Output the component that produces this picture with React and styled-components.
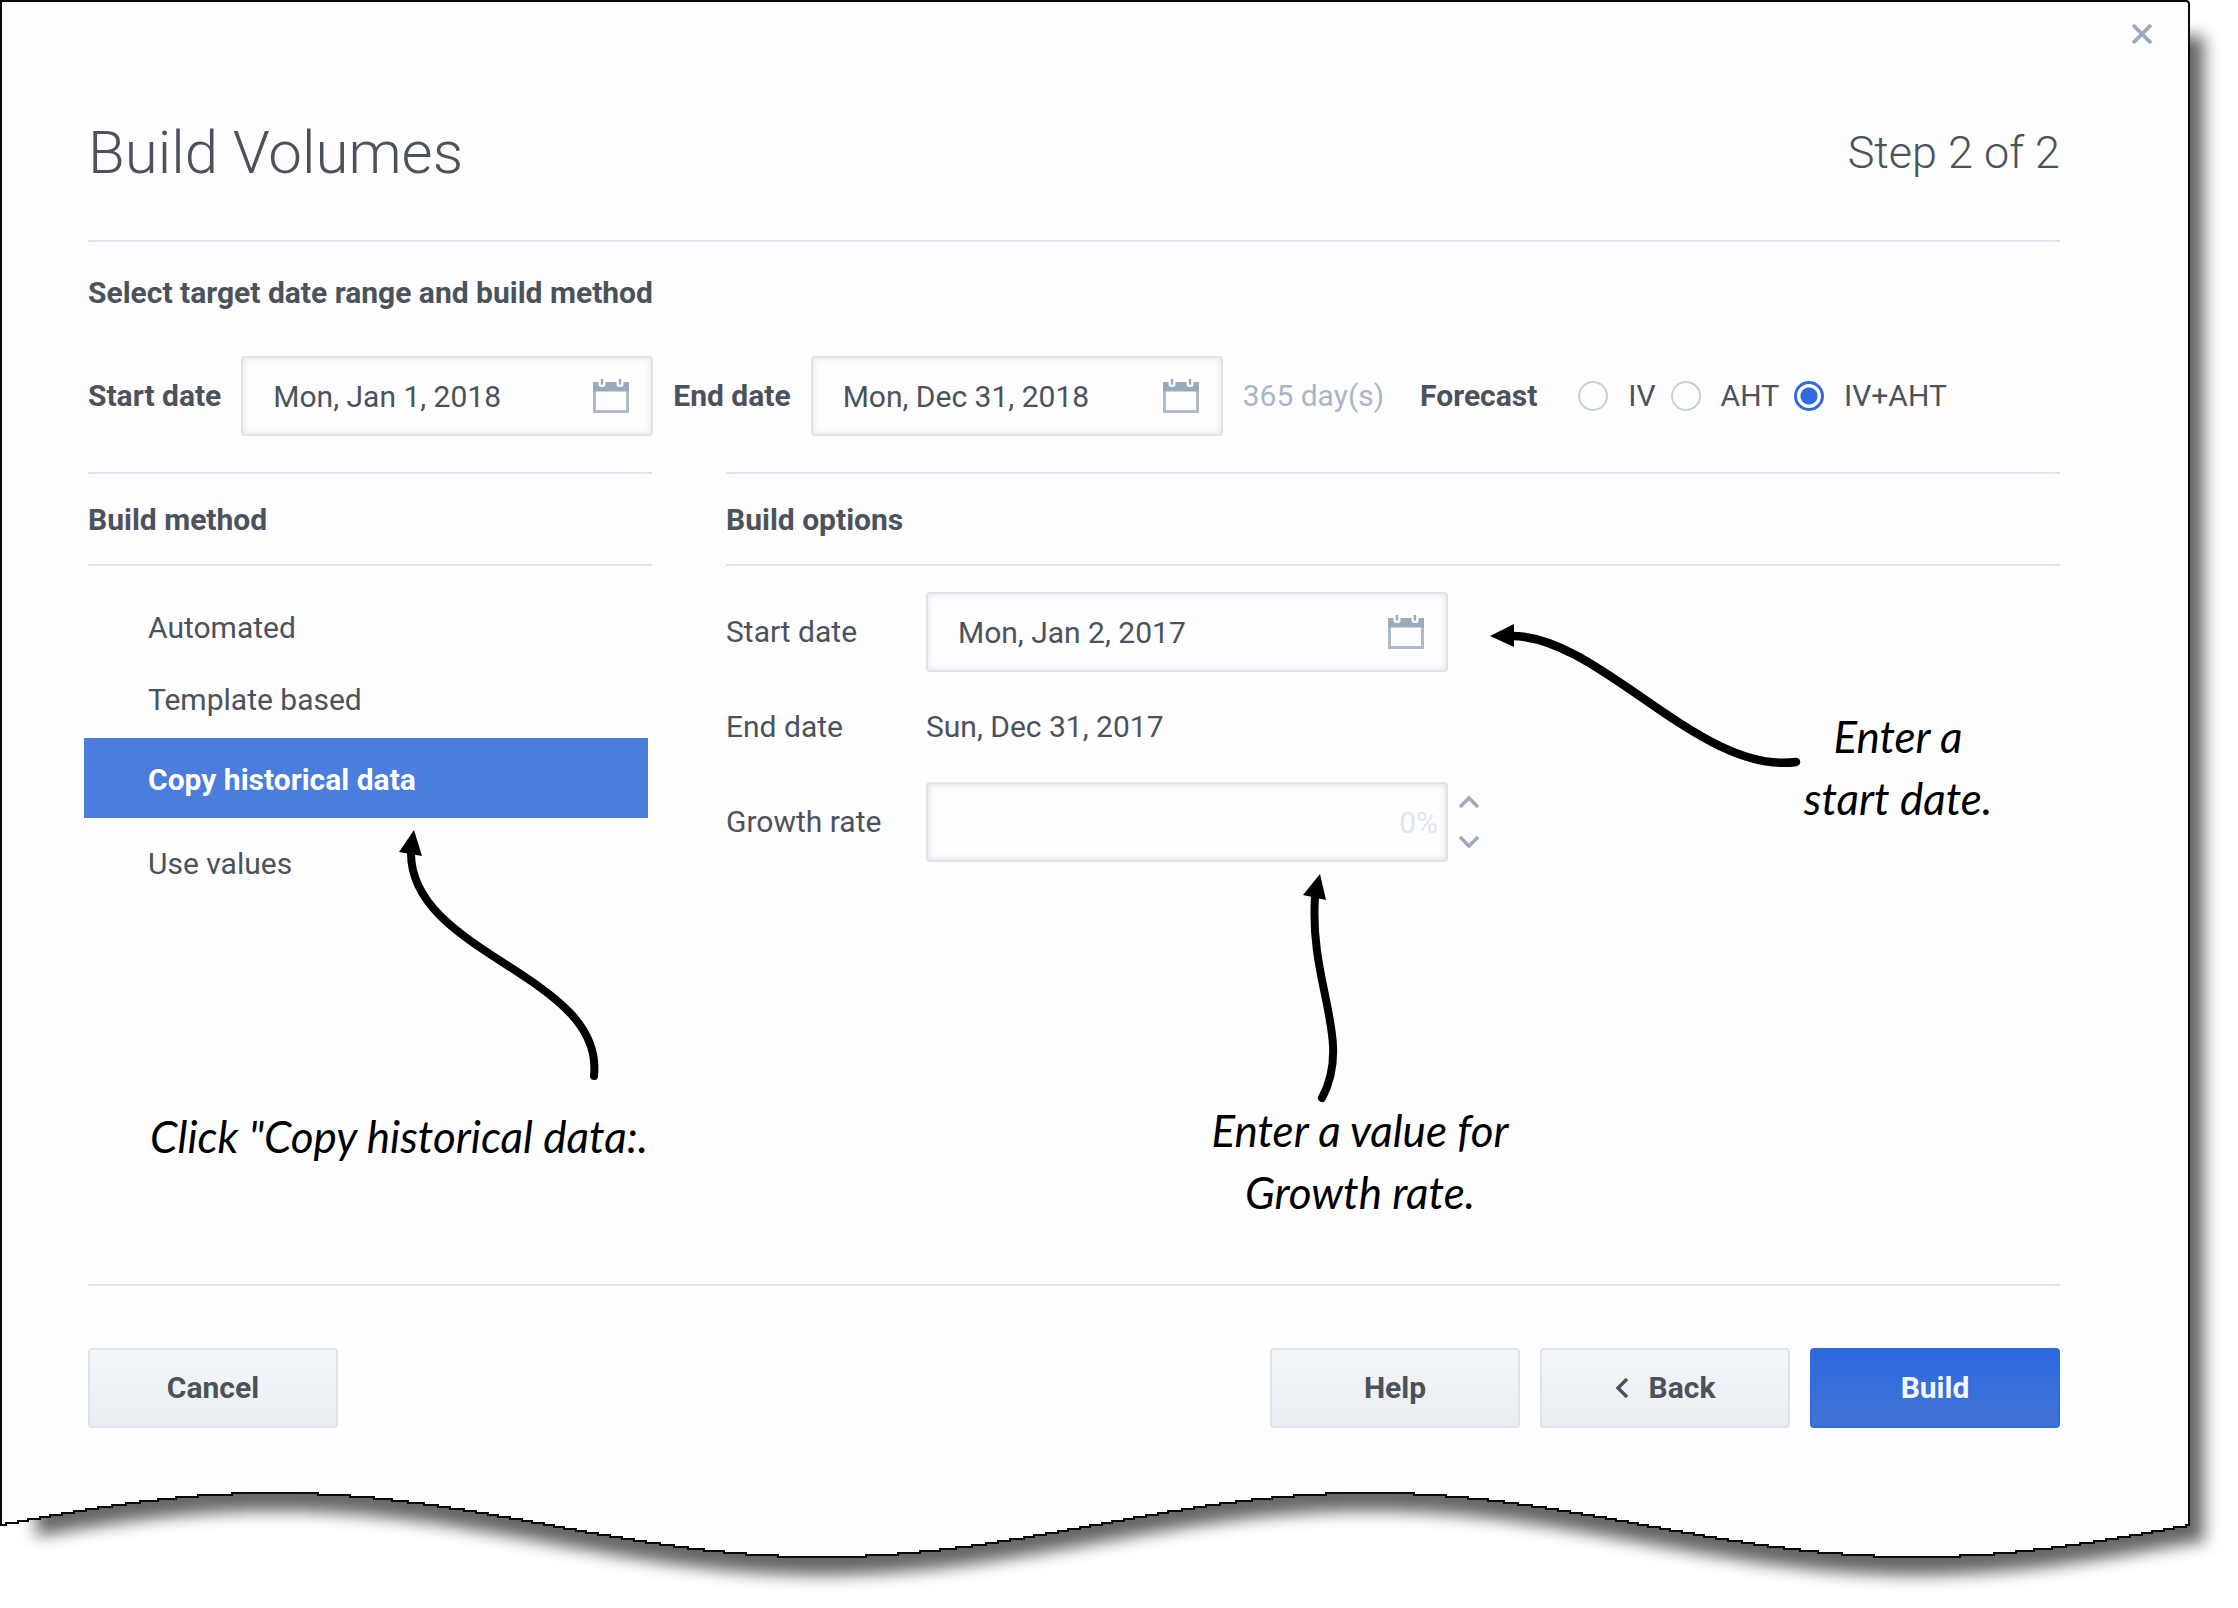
import React from "react";
import styled, { createGlobalStyle } from "styled-components";

const INK = "#4b525b";
const RULE = "#dde3ea";
const STEEL = "#9aaabd";
const BLUE = "#2f6bdc";
const PAPER = "#fdfdfd";

const GlobalStyle = createGlobalStyle`
  *, *::before, *::after { box-sizing: border-box; }
  body {
    margin: 0;
    background: #ffffff;
    color: ${INK};
    font-family: Roboto, "Liberation Sans", sans-serif;
    font-size: 30px;
    line-height: 32px;
  }
  button, input { font: inherit; color: inherit; }
  h1, h2, ul, p { margin: 0; padding: 0; }
`;

const Page = styled.main`
  padding-right: 48px;
  overflow: hidden;
`;

const SheetWrap = styled.div`
  position: relative;
  z-index: 0;
  clip-path: inset(0 -48px 0 0);

  &::before {
    content: "";
    position: absolute;
    z-index: -1;
    inset: 36px -14px -100px 36px;
    background: rgba(0, 0, 0, 0.6);
    filter: blur(8px);
  }
`;

const Sheet = styled.section`
  position: relative;
  padding: 0 128px 60px 86px;
  background: ${PAPER};
  border: 2px solid #0a0a0a;
  border-bottom: 0;
  border-top-right-radius: 4px;
`;

const CloseButton = styled.button`
  position: absolute;
  top: 16px;
  right: 30px;
  width: 32px;
  height: 32px;
  padding: 4px;
  border: 0;
  background: none;
  color: ${STEEL};

  svg { display: block; }
`;

const Header = styled.header`
  display: flex;
  align-items: center;
  justify-content: space-between;
  padding: 117px 0 53px;
  border-bottom: 2px solid ${RULE};
`;

const Title = styled.h1`
  font-size: 60px;
  line-height: 68px;
  font-weight: 300;
`;

const Step = styled.p`
  font-size: 45px;
  line-height: 54px;
  font-weight: 300;
`;

const SectionTitle = styled.h2`
  margin-top: 35px;
  font-size: 30px;
  line-height: 32px;
  font-weight: 700;
`;

const RangeRow = styled.div`
  display: flex;
  align-items: center;
  gap: 20px;
  margin-top: 47px;
`;

const Label = styled.label`
  font-weight: ${(p) => (p.$strong ? 700 : 400)};
  white-space: nowrap;
`;

const FieldBox = styled.div`
  display: flex;
  align-items: center;
  width: ${(p) => (p.$wide ? 522 : 412)}px;
  height: 80px;
  padding-right: 22px;
  border: 2px solid ${RULE};
  border-radius: 4px;
  box-shadow: inset 0 0 6px rgba(70, 80, 95, 0.15);
`;

const FieldInput = styled.input`
  flex: 1;
  min-width: 0;
  height: 100%;
  padding: 0 0 0 30px;
  border: 0;
  outline: 0;
  background: none;
`;

const IconButton = styled.button`
  display: flex;
  padding: 0;
  border: 0;
  background: none;
  color: ${STEEL};
`;

const GrowthInput = styled.input`
  width: 522px;
  height: 80px;
  padding: 0 8px;
  border: 2px solid ${RULE};
  border-radius: 4px;
  background: none;
  box-shadow: inset 0 0 6px rgba(70, 80, 95, 0.2);
  text-align: right;
  outline: 0;

  &::placeholder { color: #dfe5ec; opacity: 1; }
`;

const DayCount = styled.span`
  color: #a9b6c7;
  white-space: nowrap;
`;

const Forecast = styled.div`
  display: flex;
  align-items: center;
  gap: 15px;
  margin-left: 16px;
`;

const ForecastLabel = styled.span`
  margin-right: 26px;
  font-weight: 700;
`;

const RadioLabel = styled.label`
  display: flex;
  align-items: center;
  gap: 20px;
  white-space: nowrap;
`;

const Radio = styled.input`
  appearance: none;
  width: 30px;
  height: 30px;
  margin: 0;
  border: 2px solid #c5d0dc;
  border-radius: 50%;

  &:checked {
    border: 3px solid ${BLUE};
    background: radial-gradient(circle, ${BLUE} 8px, transparent 9px);
  }
`;

const Columns = styled.div`
  display: grid;
  grid-template-columns: 564px 1fr;
  column-gap: 74px;
  min-height: 812px;
  margin-top: 36px;
`;

const ColumnTitle = styled.h2`
  padding: 30px 0 28px;
  border: solid ${RULE};
  border-width: 2px 0;
  font-size: 30px;
  line-height: 32px;
  font-weight: 700;
`;

const MethodList = styled.ul`
  display: flex;
  flex-direction: column;
  gap: 4px;
  margin-left: -4px;
  padding-top: 28px;
  list-style: none;
`;

const MethodButton = styled.button`
  display: block;
  width: 564px;
  height: ${(p) => (p.$active ? 80 : 68)}px;
  margin-bottom: ${(p) => (p.$active ? 8 : 0)}px;
  padding: ${(p) => (p.$active ? 4 : 0)}px 0 0 64px;
  border: 0;
  background: ${(p) => (p.$active ? "#4a7ddc" : "none")};
  color: ${(p) => (p.$active ? "#ffffff" : INK)};
  font-weight: ${(p) => (p.$active ? 700 : 400)};
  text-align: left;
`;

const Options = styled.div`
  display: grid;
  grid-template-columns: 200px 1fr;
  align-items: center;
  row-gap: 39px;
  padding-top: 26px;
`;

const GrowthField = styled.div`
  display: flex;
  align-items: center;
  gap: 10px;
`;

const Spinner = styled.div`
  display: flex;
  flex-direction: column;
  gap: 16px;
`;

const Footer = styled.footer`
  display: flex;
  gap: 20px;
  padding-top: 62px;
  border-top: 2px solid ${RULE};
`;

const ActionButton = styled.button`
  display: flex;
  align-items: center;
  justify-content: center;
  gap: 20px;
  width: 250px;
  height: 80px;
  margin-right: ${(p) => (p.$start ? "auto" : 0)};
  border: 2px solid ${(p) => (p.$primary ? BLUE : RULE)};
  border-radius: 4px;
  background: ${(p) =>
    p.$primary
      ? "linear-gradient(#2c69dc, #4373d6)"
      : "linear-gradient(#f3f7fa, #eaedf2)"};
  color: ${(p) => (p.$primary ? "#f3f6fd" : INK)};
  font-weight: 700;
`;

const Note = styled.p`
  position: absolute;
  top: ${(p) => p.$top}px;
  left: ${(p) => p.$left}px;
  width: ${(p) => p.$width}px;
  color: #000000;
  font-family: "Segoe Print", "Ink Free", Lato, "Noto Sans", sans-serif;
  font-size: 44px;
  font-style: italic;
  line-height: 62px;
  text-align: center;
  white-space: pre-line;
`;

const Arrow = styled.svg`
  position: absolute;
  top: ${(p) => p.$top}px;
  left: ${(p) => p.$left}px;
  pointer-events: none;
`;

const TornEdge = styled.svg`
  display: block;
  width: 100%;
  height: 120px;
  overflow: visible;
  clip-path: inset(0 -48px 0 0);
`;

function CalendarIcon() {
  return (
    <svg width="36" height="36" viewBox="0 0 36 36" aria-hidden="true">
      <path d="M1.5 6V33.6H34.5V6" fill="none" stroke="currentColor" strokeOpacity="0.8" strokeWidth="3" />
      <path
        d="M0 4H5.5V6.5Q5.5 9 9 9T12.5 6.5V4H23.5V6.5Q23.5 9 27 9T30.5 6.5V4H36V13.5H0Z"
        fill="currentColor"
      />
      <path d="M9 1V6.5M27 1V6.5" stroke="currentColor" strokeWidth="2.4" />
    </svg>
  );
}

function Chevron({ d, width, height }) {
  return (
    <svg width={width} height={height} viewBox={`0 0 ${width} ${height}`} aria-hidden="true">
      <path d={d} fill="none" stroke="currentColor" strokeWidth="3.4" />
    </svg>
  );
}

function DateField({ id, value, wide }) {
  return (
    <FieldBox $wide={wide}>
      <FieldInput id={id} type="text" defaultValue={value} />
      <IconButton type="button" aria-label="Open calendar">
        <CalendarIcon />
      </IconButton>
    </FieldBox>
  );
}

const WAVE_WIDTH = 2190;
const WAVE_MID = 37;

function wavePath(step) {
  let d = "";
  let last = null;
  for (let x = 0; x <= WAVE_WIDTH; x += 2) {
    const raw = WAVE_MID - 32 * Math.sin((x * 4 * Math.PI) / WAVE_WIDTH);
    const y = step ? Math.round((raw - 1) / 2) * 2 + 1 : Math.round(raw);
    if (last === null) d += `M${x} ${y}`;
    else if (y !== last) d += `H${x}V${y}`;
    last = y;
  }
  return `${d}H${WAVE_WIDTH - 1}`;
}

const EDGE = wavePath(true);
const SHADOW = wavePath(false);

const METHODS = ["Automated", "Template based", "Copy historical data", "Use values"];
const FORECASTS = ["IV", "AHT", "IV+AHT"];

export default function App() {
  const [method, setMethod] = React.useState("Copy historical data");

  return (
    <Page>
      <GlobalStyle />
      <SheetWrap>
        <Sheet>
          <CloseButton type="button" aria-label="Close">
            <svg width="24" height="24" viewBox="0 0 24 24" aria-hidden="true">
              <path d="M3 3L21 21M21 3L3 21" stroke="currentColor" strokeWidth="3.8" />
            </svg>
          </CloseButton>

          <Header>
            <Title>Build Volumes</Title>
            <Step>Step 2 of 2</Step>
          </Header>

          <SectionTitle>Select target date range and build method</SectionTitle>
          <RangeRow>
            <Label $strong htmlFor="target-start">Start date</Label>
            <DateField id="target-start" value="Mon, Jan 1, 2018" />
            <Label $strong htmlFor="target-end">End date</Label>
            <DateField id="target-end" value="Mon, Dec 31, 2018" />
            <DayCount>365 day(s)</DayCount>
            <Forecast role="radiogroup" aria-labelledby="forecast-label">
              <ForecastLabel id="forecast-label">Forecast</ForecastLabel>
              {FORECASTS.map((name) => (
                <RadioLabel key={name}>
                  <Radio type="radio" name="forecast" defaultChecked={name === "IV+AHT"} />
                  {name}
                </RadioLabel>
              ))}
            </Forecast>
          </RangeRow>

          <Columns>
            <div>
              <ColumnTitle>Build method</ColumnTitle>
              <MethodList>
                {METHODS.map((name) => (
                  <li key={name}>
                    <MethodButton
                      type="button"
                      $active={name === method}
                      aria-pressed={name === method}
                      onClick={() => setMethod(name)}
                    >
                      {name}
                    </MethodButton>
                  </li>
                ))}
              </MethodList>
            </div>
            <div>
              <ColumnTitle>Build options</ColumnTitle>
              <Options>
                <Label htmlFor="source-start">Start date</Label>
                <DateField id="source-start" value="Mon, Jan 2, 2017" wide />
                <span>End date</span>
                <span>Sun, Dec 31, 2017</span>
                <Label htmlFor="growth">Growth rate</Label>
                <GrowthField>
                  <GrowthInput id="growth" type="text" placeholder="0%" />
                  <Spinner>
                    <IconButton type="button" aria-label="Increase">
                      <Chevron width={22} height={24} d="M2 17L11 8L20 17" />
                    </IconButton>
                    <IconButton type="button" aria-label="Decrease">
                      <Chevron width={22} height={24} d="M2 7L11 16L20 7" />
                    </IconButton>
                  </Spinner>
                </GrowthField>
              </Options>
            </div>
          </Columns>

          <Footer>
            <ActionButton type="button" $start>Cancel</ActionButton>
            <ActionButton type="button">Help</ActionButton>
            <ActionButton type="button">
              <Chevron width={14} height={20} d="M12 1L3 10L12 19" />
              Back
            </ActionButton>
            <ActionButton type="button" $primary>Build</ActionButton>
          </Footer>

          <Arrow $top={618} $left={1478} width="330" height="160" viewBox="1480 620 330 160" aria-hidden="true">
            <path d="M1512 636C1600 636 1700 775 1796 762" fill="none" stroke="#000" strokeWidth="8.5" strokeLinecap="round" />
            <path d="M1490 636L1514 624V647Z" />
          </Arrow>
          <Note $top={703} $left={1776} $width={240}>{"Enter a\nstart date."}</Note>

          <Arrow $top={818} $left={378} width="240" height="280" viewBox="380 820 240 280" aria-hidden="true">
            <path d="M411 853C411 955 605 975 594 1076" fill="none" stroke="#000" strokeWidth="8" strokeLinecap="round" />
            <path d="M414 830L399 852L422 856Z" />
          </Arrow>
          <Note $top={1103} $left={137} $width={520}>{'Click "Copy historical data:.'}</Note>

          <Arrow $top={858} $left={1278} width="80" height="260" viewBox="1280 860 80 260" aria-hidden="true">
            <path d="M1315 897C1309 985 1353 1040 1322 1098" fill="none" stroke="#000" strokeWidth="8" strokeLinecap="round" />
            <path d="M1320 874L1303 895L1326 900Z" />
          </Arrow>
          <Note $top={1097} $left={1178} $width={360}>{"Enter a value for\nGrowth rate."}</Note>
        </Sheet>
      </SheetWrap>

      <TornEdge viewBox={`0 0 ${WAVE_WIDTH} 120`} preserveAspectRatio="none" aria-hidden="true">
        <defs>
          <filter id="soft" x="-5%" y="-50%" width="110%" height="200%">
            <feGaussianBlur stdDeviation="8" />
          </filter>
          <clipPath id="shadow-start">
            <rect x="36" y="-100" width="2200" height="300" />
          </clipPath>
        </defs>
        <g filter="url(#soft)">
          <g clipPath="url(#shadow-start)">
            <path transform="translate(0 18)" d={`${SHADOW}H2204V-128H0Z`} fillOpacity="0.6" />
          </g>
        </g>
        <path d={`${EDGE}V-4H1Z`} fill={PAPER} />
        <path d={EDGE} fill="none" stroke="#0a0a0a" strokeWidth="2" shapeRendering="crispEdges" />
        <path d={`M1 0V${WAVE_MID}M${WAVE_WIDTH - 1} 0V${WAVE_MID + 1}`} stroke="#0a0a0a" strokeWidth="2" />
      </TornEdge>
    </Page>
  );
}
